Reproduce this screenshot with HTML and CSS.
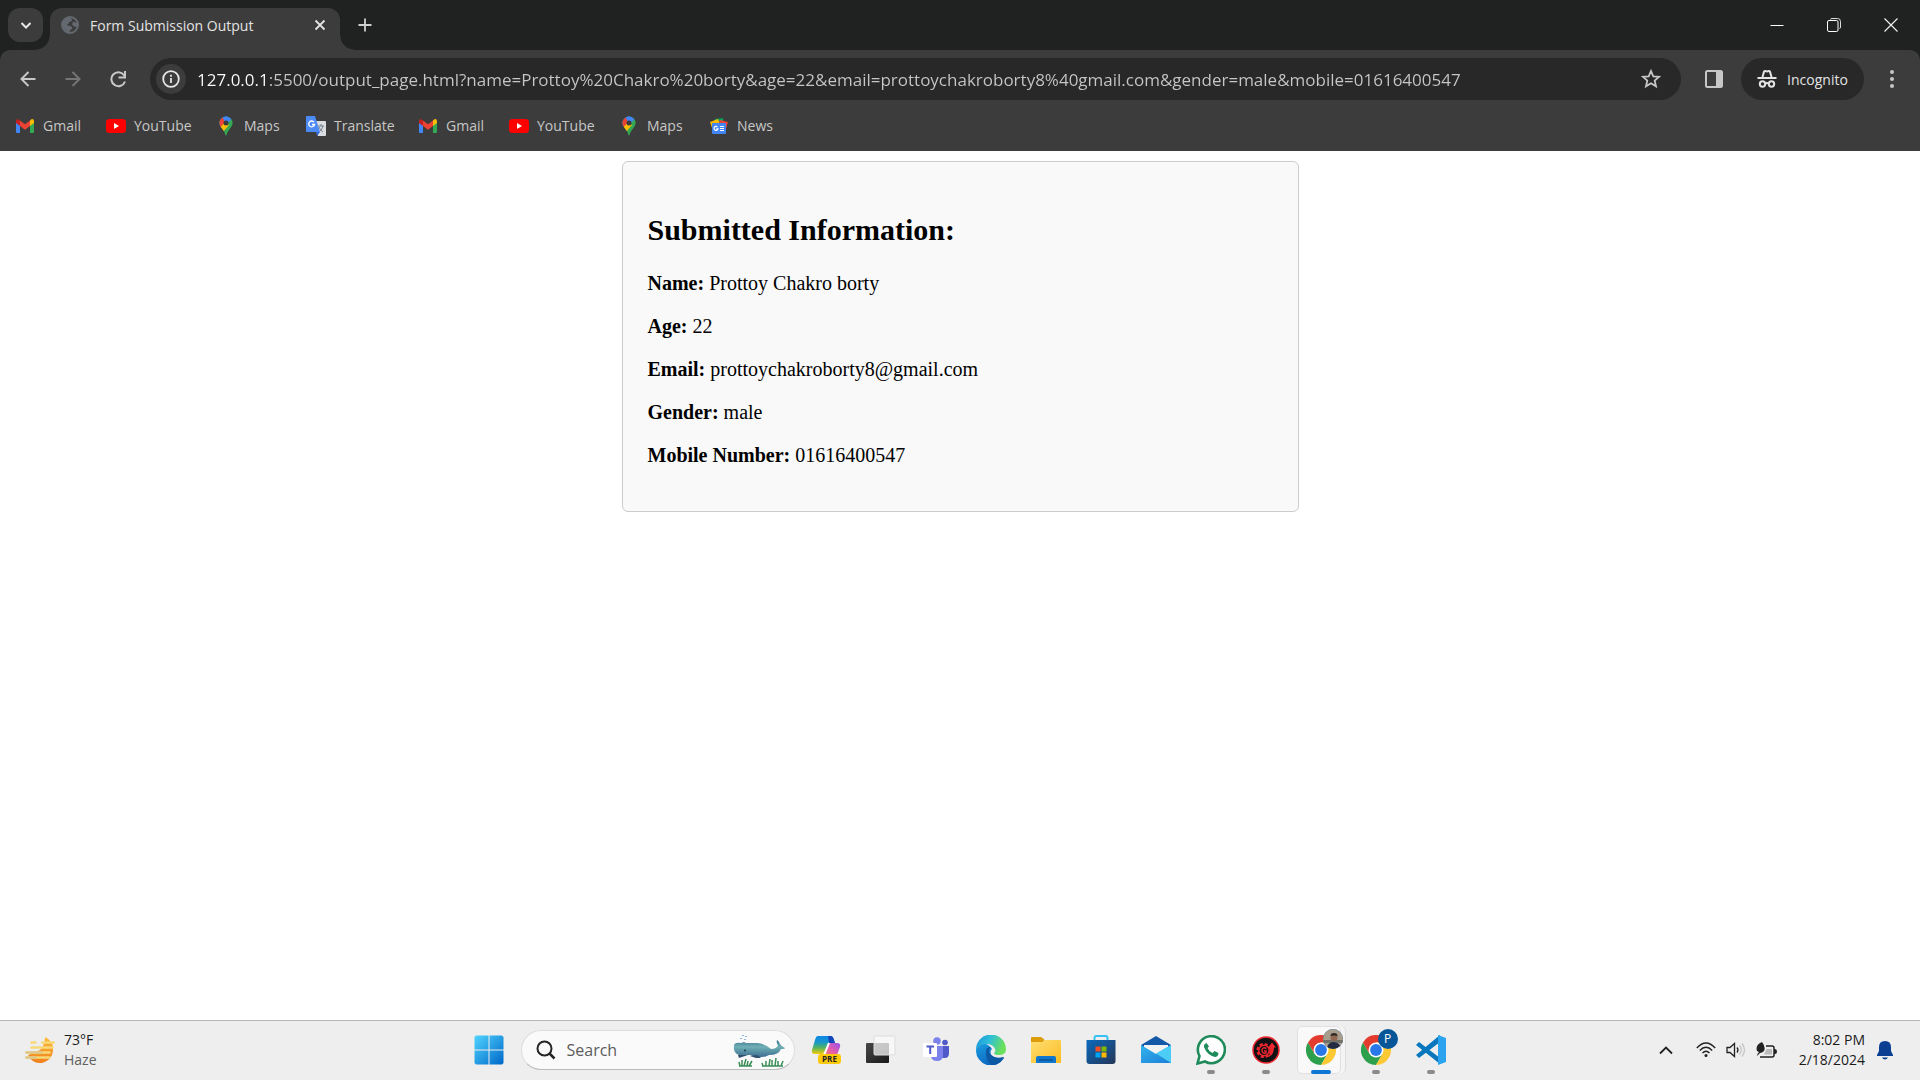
FILE: index.html
```html
<!DOCTYPE html>
<html lang="en">
<head>
<meta charset="utf-8">
<title>Form Submission Output</title>
<link rel="stylesheet" href="styles.css">
</head>
<body>
<svg class="defs" aria-hidden="true">
  <defs>
    <linearGradient id="win" x1="0" y1="0" x2="1" y2="1"><stop offset="0" stop-color="#4fd4fe"/><stop offset="1" stop-color="#0067c8"/></linearGradient>
    <linearGradient id="sun" x1="0" y1="0" x2="0" y2="1"><stop offset="0" stop-color="#fdbd3c"/><stop offset="1" stop-color="#f07f1c"/></linearGradient>
    <linearGradient id="whale" x1="0" y1="0" x2="0" y2="1"><stop offset="0" stop-color="#3f7396"/><stop offset=".4" stop-color="#6fb0b4"/><stop offset="1" stop-color="#3d6d93"/></linearGradient>
    <linearGradient id="copa" x1="0" y1="0" x2="0" y2="1"><stop offset="0" stop-color="#0d87e8"/><stop offset=".35" stop-color="#1897c8"/><stop offset=".65" stop-color="#55b45f"/><stop offset="1" stop-color="#f5cb0a"/></linearGradient>
    <linearGradient id="copb" x1="1" y1="0" x2="0" y2="1"><stop offset="0" stop-color="#9a4fec"/><stop offset=".5" stop-color="#e95fa5"/><stop offset="1" stop-color="#fa8a4c"/></linearGradient>
    <linearGradient id="dark" x1="0" y1="0" x2="1" y2="1"><stop offset="0" stop-color="#484848"/><stop offset="1" stop-color="#191919"/></linearGradient>
    <linearGradient id="edgea" x1="0" y1="0" x2="1" y2=".3"><stop offset="0" stop-color="#1a8fdc"/><stop offset=".5" stop-color="#2fc0d8"/><stop offset="1" stop-color="#6be05a"/></linearGradient>
    <linearGradient id="edgeb" x1="0" y1="0" x2=".6" y2="1"><stop offset="0" stop-color="#1b9de2"/><stop offset="1" stop-color="#0b63bd"/></linearGradient>
    <linearGradient id="fold" x1="0" y1="0" x2="1" y2="1"><stop offset="0" stop-color="#ffdf74"/><stop offset="1" stop-color="#fcbc22"/></linearGradient>
    <linearGradient id="store" x1="0" y1="0" x2="1" y2="1"><stop offset="0" stop-color="#0b6abd"/><stop offset="1" stop-color="#243557"/></linearGradient>
    <linearGradient id="mail" x1="0" y1="0" x2="1" y2="1"><stop offset="0" stop-color="#33b4ec"/><stop offset="1" stop-color="#1b7fd8"/></linearGradient>
    <symbol id="i-gmail" viewBox="0 0 20 20"><path d="M1 5v11q0 1 1 1h3V8z" fill="#4285f4"/><path d="M15 8v9h3q1 0 1-1V5z" fill="#34a853"/><path d="M15 4.500V10l4-3V5q0-2-2-2-.8 0-2 1.500z" fill="#fbbc04"/><path d="M5 4.500V10l5 3.700 5-3.700V4.500l-5 3.800z" fill="#ea4335"/><path d="M1 5v2l4 3V4.500Q3.500 3 2.500 3.200 1 3.500 1 5z" fill="#c5221f"/></symbol>
    <symbol id="i-youtube" viewBox="0 0 20 20"><rect y="3" width="20" height="14" rx="3.500" fill="#f00"/><path d="M8 7l5 3-5 3z" fill="#fff"/></symbol>
    <symbol id="i-maps" viewBox="0 0 20 20"><clipPath id="pin"><path d="M10 .5a6.600 6.600 0 0 0-6.600 6.600c0 2.600 1.600 4.300 3.200 6.200C8.100 15.200 9 17 9.300 18.700q.7 1.600 1.400 0c.3-1.700 1.200-3.500 2.700-5.400 1.600-1.900 3.200-3.600 3.200-6.200A6.600 6.600 0 0 0 10 .5z"/></clipPath><g clip-path="url(#pin)"><path d="M0 0h20v20H0z" fill="#34a853"/><path d="M0 16L14 0H0z" fill="#1a73e8"/><path d="M0 0h6l4 7-8 7z" fill="#ea4335"/><path d="M6 0h14L10 8z" fill="#4285f4"/><path d="M3 13l6-7 4 3-6 7z" fill="#fbbc04"/></g><circle cx="10" cy="7" r="2.500" fill="#3c3c3c"/></symbol>
    <symbol id="i-translate" viewBox="0 0 20 20"><path d="M8 5h11q1 0 1 1v13q0 1-1 1h-7z" fill="#d9dce0"/><path d="M12 10h6m-3-2v2m2 0q-1 4-4 6m0-5q1 3 4 5" stroke="#75808d" fill="none"/><path d="M1 0h8l5 16H1q-1 0-1-1V1q0-1 1-1z" fill="#4c8bf5"/><path d="M10 16h4l-3 4z" fill="#3367d6"/><path d="M8 6.200A2.900 2.900 0 1 0 8.500 8.500H6" stroke="#fff" stroke-width="1.300" fill="none"/></symbol>
    <symbol id="i-news" viewBox="0 0 20 20"><path d="M6 3l8-1 1 6H5z" fill="#0c9d58"/><path d="M1 6l8-3 2 5-8 4z" fill="#fbbc04"/><path d="M11 4l8 2-2 7-8-4z" fill="#ea4335"/><rect x="3" y="7" width="14" height="11" rx="1" fill="#4285f4"/><path d="M8.500 11A2 2 0 1 0 9 12.800H7.300M11 10.500h4M11 12.500h4M11 14.500h4" stroke="#fff" stroke-width="1.200" fill="none"/></symbol>
    <symbol id="i-chrome" viewBox="0 0 30 30"><path d="M2 7.500A15 15 0 0 0 15 30l6.500-11.300L15 15 8.500 18.700z" fill="#2ca04c"/><path d="M15 7.500h13A15 15 0 0 0 2 7.500l6.500 11.200z" fill="#e33b2e"/><path d="M15 7.500h13A15 15 0 0 1 15 30l6.500-11.300z" fill="#fcc934"/><circle cx="15" cy="15" r="7.500" fill="#fff"/><circle cx="15" cy="15" r="5.900" fill="#2878ea"/></symbol>
  </defs>
</svg>

<header class="browser">
  <div class="tabstrip">
    <button class="tab-search" aria-label="Search tabs"><svg width="14" height="14" viewBox="0 0 14 14"><path d="M2.500 5L7 9.500 11.500 5" stroke="#e8e8e8" stroke-width="2" fill="none"/></svg></button>
    <div class="tab">
      <svg width="18" height="18" viewBox="0 0 18 18"><circle cx="9" cy="9" r="8" fill="none" stroke="#646970" stroke-width="2"/><path d="M1 9Q1 3 8 1.500L11 3q0 3-3 3 0 2-2 2.500 0 1 3 1.500 3 .5 2 3-2 0-2.500 3.500Q5 16 2.500 12zM12 6l5 1v3q-2 2-4 0-3-1-1-4z" fill="#646970"/></svg>
      <span class="tab-title">Form Submission Output</span>
      <button class="plain" aria-label="Close tab"><svg width="12" height="12" viewBox="0 0 12 12"><path d="M1.500 1.500l9 9M10.500 1.500l-9 9" stroke="#e3e3e3" stroke-width="1.800"/></svg></button>
    </div>
    <button class="plain new-tab" aria-label="New tab"><svg width="14" height="14" viewBox="0 0 14 14"><path d="M7 .5v13M.5 7h13" stroke="#d0d0d0" stroke-width="1.800"/></svg></button>
    <div class="window-controls">
      <button class="plain" aria-label="Minimize"><svg width="14" height="14" viewBox="0 0 14 14"><path d="M.5 7.500h13" stroke="#fff"/></svg></button>
      <button class="plain" aria-label="Restore"><svg width="14" height="14" viewBox="0 0 14 14" fill="none"><path d="M3.500 1.500Q3.500.5 5 .5h5.500q3 0 3 3V9q0 1.500-1 1.500" stroke="#ddd"/><rect x=".5" y="2.500" width="10.500" height="11" rx="1.500" stroke="#fff"/></svg></button>
      <button class="plain" aria-label="Close"><svg width="14" height="14" viewBox="0 0 14 14"><path d="M.5.5l13 13M13.500.5l-13 13" stroke="#eee" stroke-width="1.200"/></svg></button>
    </div>
  </div>

  <div class="toolbar">
    <nav class="history" aria-label="History">
      <button class="plain" aria-label="Back"><svg width="16" height="16" viewBox="0 0 16 16" fill="none" stroke="#c7c7c7" stroke-width="2"><path d="M15.500 8H2M8.500 1L1.500 8l7 7"/></svg></button>
      <button class="plain" aria-label="Forward"><svg width="16" height="16" viewBox="0 0 16 16" fill="none" stroke="#757575" stroke-width="2"><path d="M.5 8H14M7.500 1l7 7-7 7"/></svg></button>
      <button class="plain" aria-label="Reload"><svg width="18" height="18" viewBox="0 0 18 18" fill="none" stroke="#c7c7c7" stroke-width="2"><path d="M16 11.500A7 7 0 1 1 15 5l1 2"/><path d="M16 1v6.500h-6.500"/></svg></button>
    </nav>
    <div class="omnibox">
      <button class="site-info" aria-label="Site information"><svg width="18" height="18" viewBox="0 0 18 18"><circle cx="9" cy="9" r="7.800" fill="none" stroke="#e6e6e6" stroke-width="1.800"/><path d="M9 8v5M9 4.800v2" stroke="#e6e6e6" stroke-width="1.800"/></svg></button>
      <input class="url" type="text" aria-label="Address" value="127.0.0.1:5500/output_page.html?name=Prottoy%20Chakro%20borty&amp;age=22&amp;email=prottoychakroborty8%40gmail.com&amp;gender=male&amp;mobile=01616400547">
      <button class="plain" aria-label="Bookmark this tab"><svg width="20" height="20" viewBox="0 0 20 20"><path d="M10 2l2.300 5.300 5.700.5-4.300 3.800 1.300 5.700-5-3-5 3 1.300-5.700L2 7.800l5.700-.5z" fill="none" stroke="#c7c7c7" stroke-width="1.800"/></svg></button>
    </div>
    <button class="plain side-panel" aria-label="Side panel"><svg width="18" height="18" viewBox="0 0 18 18"><rect x="1" y="1" width="16" height="16" rx="1.500" fill="none" stroke="#c7c7c7" stroke-width="2"/><path d="M11 1h6v16h-6z" fill="#c7c7c7"/></svg></button>
    <button class="incognito"><svg width="20" height="20" viewBox="0 0 20 20"><path d="M.5 8h19v2H.5z" fill="#e3e3e3"/><path d="M4.500 8L6 2.500Q6.500.5 8.500 1l1.500.4 1.500-.4q2-.5 2.500 1.500L15.500 8h-2L12 3l-2 .5L8 3 6.500 8z" fill="#e3e3e3"/><g fill="none" stroke="#e3e3e3" stroke-width="2"><circle cx="5.500" cy="15" r="2.700"/><circle cx="14.500" cy="15" r="2.700"/><path d="M8 14.500q2-1 4 0"/></g></svg>Incognito</button>
    <button class="plain menu" aria-label="Menu"><svg width="6" height="20" viewBox="0 0 6 20" fill="#c7c7c7"><circle cx="3" cy="3" r="2"/><circle cx="3" cy="10" r="2"/><circle cx="3" cy="17" r="2"/></svg></button>
  </div>

  <nav class="bookmarks" aria-label="Bookmarks">
    <a href="#"><svg><use href="#i-gmail"/></svg>Gmail</a>
    <a href="#"><svg><use href="#i-youtube"/></svg>YouTube</a>
    <a href="#"><svg><use href="#i-maps"/></svg>Maps</a>
    <a href="#"><svg><use href="#i-translate"/></svg>Translate</a>
    <a href="#"><svg><use href="#i-gmail"/></svg>Gmail</a>
    <a href="#"><svg><use href="#i-youtube"/></svg>YouTube</a>
    <a href="#"><svg><use href="#i-maps"/></svg>Maps</a>
    <a href="#"><svg><use href="#i-news"/></svg>News</a>
  </nav>
</header>

<main class="page">
  <section class="card">
    <h2>Submitted Information:</h2>
    <p><strong>Name:</strong> Prottoy Chakro borty</p>
    <p><strong>Age:</strong> 22</p>
    <p><strong>Email:</strong> prottoychakroborty8@gmail.com</p>
    <p><strong>Gender:</strong> male</p>
    <p><strong>Mobile Number:</strong> 01616400547</p>
  </section>
</main>

<footer class="taskbar">
  <button class="weather">
    <svg width="30" height="30" viewBox="0 0 30 30"><path d="M20 2q9 4 8 14a13 13 0 0 1-25 4l8-3q9-3 9-15z" fill="url(#sun)"/><path d="M6.500 7.500h4M17 7.500h12M6.500 12.500h21M1.500 17.500h23M1.500 22.500h23" stroke="#f8d978" stroke-width="2.500" stroke-linecap="round"/><path d="M1.500 17.500h15M1.500 22.500h9" stroke="#dcc78c" stroke-width="2.500" stroke-linecap="round"/></svg>
    <span class="weather-text"><span>73°F</span><span class="muted">Haze</span></span>
  </button>

  <div class="apps">
    <button class="app" aria-label="Start"><svg width="30" height="30" viewBox="0 0 30 30"><path d="M2 .5h12.500v14H.5V2zM15.500.5H28l1.500 1.500v12.500h-14zM.5 15.500h14v14H2L.5 28zM15.500 15.500h14V28L28 29.500H15.500z" fill="url(#win)"/></svg></button>
    <label class="search">
      <svg width="20" height="20" viewBox="0 0 20 20" fill="none" stroke="#252525"><circle cx="8.500" cy="8.500" r="7" stroke-width="2"/><path d="M13.500 13.500l5 5" stroke-width="2.500"/></svg>
      <input type="search" placeholder="Search" aria-label="Search">
      <svg width="52" height="34" viewBox="0 0 52 34"><path d="M1 13Q1 9 8 10l3-1 2 1h11q9 1 14 6 6 0 7-4-2-2-1-5 2 1 3 4 1 2 5 4 0 1-4 1-2 6-12 6-5 3-14 2l-5-2H6Q0 20 1 13z" fill="url(#whale)"/><path d="M5 22h10l-9 3zM17 23l6 2h5l-4-3z" fill="#31506d"/><circle cx="12" cy="17.500" r="1" fill="#19384f"/><path d="M10 2v1M8 5v1M12 6v1M13 3v1" stroke="#6aa6e0" stroke-width="1.500"/><path d="M7 33l-1-4M9 33v-6M11 33l2-7M14 33l1-5M16 33l3-5M30 33l-1-3M33 33v-5M36 33l1-7M39 33v-6M42 33l1-8M45 33v-5M48 33l2-5M6 33h13M29 33h21" stroke="#3a8c57" stroke-width="1.500" fill="none"/></svg>
    </label>
    <button class="app" aria-label="Copilot preview"><svg width="30" height="30" viewBox="0 0 30 30"><path d="M7 1h12q3 0 4 4l1 3h-6l-5 11H4Q0 19 1 15L4 5q1-4 3-4z" fill="url(#copa)"/><path d="M17 1h3q2 0 3 4l1 3h-6z" fill="#1246ba"/><path d="M19 8h7q4 0 3 4l-3 8q-1 3-4 3H10q4-1 5-5l2-7q.5-3 2-3z" fill="url(#copb)"/><path d="M18 8l-5 12" stroke="#fff" stroke-width="2"/><rect x="7" y="19" width="23" height="10" rx="3" fill="#fdc90b"/><text x="18.500" y="27" text-anchor="middle" class="pre">PRE</text></svg></button>
    <button class="app" aria-label="Task view"><svg width="30" height="30" viewBox="0 0 30 30"><rect y="8" width="23" height="20" rx="1" fill="url(#dark)"/><rect x="8" y="1" width="21" height="19" rx="1" fill="#fafafa" fill-opacity=".75" stroke="#ddd"/></svg></button>
    <button class="app" aria-label="Teams"><svg width="30" height="30" viewBox="0 0 30 30"><circle cx="16" cy="6" r="3.800" fill="#7b83eb"/><circle cx="24" cy="7.500" r="2.800" fill="#5059c9"/><path d="M19 11h9v7q0 5-4 5t-4-2z" fill="#5059c9"/><path d="M10 11h12v9q0 6-6 6t-6-6z" fill="#7b83eb"/><rect x="2" y="8" width="14" height="14" rx="1" fill="#fff"/><path d="M5.500 11.500h7.500M9.200 11.500V19" stroke="#5059c9" stroke-width="2"/></svg></button>
    <button class="app" aria-label="Edge"><svg width="30" height="30" viewBox="0 0 30 30"><path d="M0 15a15 15 0 0 0 28 8q-8 3-12-2-3-4 0-7-4-6-10-5-4 1-6 6z" fill="url(#edgeb)"/><path d="M0 15A15 15 0 0 1 30 14q0 6-7 6-5 0-5-2 2-1 1-4-2-5-9-5-7 0-10 6z" fill="url(#edgea)"/><path d="M10 16q0-4 5-4-4 4 0 8 5 4 12 2 2 0 0 2a15 15 0 0 1-12 6q-6-6-5-14z" fill="#0c59a4"/></svg></button>
    <button class="app" aria-label="File Explorer"><svg width="30" height="30" viewBox="0 0 30 30"><path d="M0 8V3q0-1 1-1h9l3 2v4z" fill="#dc9c0b"/><path d="M0 7h11l3-2h15q1 0 1 1v22H0z" fill="url(#fold)"/><path d="M5 28v-5q0-2 2-2h16q2 0 2 2v5z" fill="#0f78ce"/><path d="M8 25h14" stroke="#0a528f" stroke-width="1.500"/></svg></button>
    <button class="app" aria-label="Microsoft Store"><svg width="30" height="30" viewBox="0 0 30 30"><path d="M8.500 7V3q0-2 2-2h9q2 0 2 2v4" fill="none" stroke="#35c1f1" stroke-width="2"/><path d="M.5 5h29v21q0 3-3 3h-23q-3 0-3-3z" fill="url(#store)"/><path d="M9.500 11.500h5v5h-5z" fill="#f25022"/><path d="M15.500 11.500h5v5h-5z" fill="#7fba00"/><path d="M9.500 17.500h5v5h-5z" fill="#00a4ef"/><path d="M15.500 17.500h5v5h-5z" fill="#ffb900"/></svg></button>
    <button class="app" aria-label="Mail"><svg width="30" height="30" viewBox="0 0 30 30"><path d="M0 10L15 1l15 9-8 8H8z" fill="#1459a8"/><path d="M3 10h24v6l-12 8-12-8z" fill="#f2f2f2"/><path d="M0 10l15 9 15-9v18H0z" fill="url(#mail)"/><path d="M30 10L15 18.500 30 28z" fill="#4ccdf5"/></svg></button>
    <button class="app running" aria-label="WhatsApp"><svg width="30" height="30" viewBox="0 0 30 30"><path d="M1.500 28.500l2-7.500A13.500 13.500 0 1 1 9 26.500z" fill="#fff" stroke="#1f8a5a" stroke-width="2.600"/><path d="M10.500 8q-3 1-2.500 4 3 8 11 10 3 0 3.500-4l-4-2-2 2q-3.500-1.500-5-5l1.500-1.500z" fill="#1f8a5a"/></svg></button>
    <button class="app running" aria-label="Game Center"><svg width="30" height="30" viewBox="0 0 30 30"><circle cx="15" cy="15" r="13" fill="#111" stroke="#ee2630" stroke-width="1.500"/><circle cx="13" cy="15.500" r="5.200" fill="none" stroke="#ee2630" stroke-width="1.500"/><circle cx="13" cy="15.500" r="6.500" fill="none" stroke="#ee2630" stroke-width="2.200" stroke-dasharray="3 2.100"/><path d="M15.500 13.500q-4-2-4.500 1.500 0 4 4 3v-2h-2" fill="none" stroke="#ee2630" stroke-width="1.400"/><path d="M16 22.500q4-3 3-10h-2l4-5 4 5h-2q0 8-7 10z" fill="#ee2630"/></svg></button>
    <button class="app running active" aria-label="Google Chrome"><svg width="30" height="30"><use href="#i-chrome"/></svg><span class="avatar"><svg width="20" height="20" viewBox="0 0 20 20"><path d="M0 0h20v20H0z" fill="#a79d8c"/><path d="M0 11h20v3H0z" fill="#71716a"/><path d="M4 20q0-6 6-7 7 0 8 7z" fill="#232b43"/><circle cx="11" cy="8.500" r="3.500" fill="#926853"/><path d="M7.500 7q0-3 3.500-3t3.500 3q-3.500-1-7 0z" fill="#2e2925"/></svg></span></button>
    <button class="app running" aria-label="Google Chrome, profile P"><svg width="30" height="30"><use href="#i-chrome"/></svg><span class="avatar">P</span></button>
    <button class="app running" aria-label="Visual Studio Code"><svg width="30" height="30" viewBox="0 0 30 30"><path d="M0 10l3-3L24 23v6z" fill="#0877bd"/><path d="M0 20l3 3L24 7V0z" fill="#0877bd"/><path d="M22 0l8 3v24l-8 3z" fill="#2aa4ee"/></svg></button>
  </div>

  <div class="tray">
    <button class="plain chevron" aria-label="Show hidden icons"><svg width="16" height="10" viewBox="0 0 16 10"><path d="M2 8.500l6-6 6 6" stroke="#222" stroke-width="1.800" fill="none"/></svg></button>
    <button class="plain status" aria-label="Network, volume and battery">
      <svg width="20" height="16" viewBox="0 0 20 16" fill="none" stroke="#222" stroke-width="1.400"><path d="M.8 6Q10-4 19.200 6M3.800 8.500q6.200-6.500 12.400 0M6.500 11Q10 7.500 13.500 11"/><circle cx="10" cy="13.500" r="1.500" fill="#222" stroke="none"/></svg>
      <svg width="20" height="16" viewBox="0 0 20 16" fill="none" stroke-width="1.300"><path d="M1 5.500h3l4.500-4v13L4 10.500H1zM11 5.500q2 2.500 0 5" stroke="#222"/><path d="M13.500 3.500q3.500 4.500 0 9M16 1.500q5 6.500 0 13" stroke="#c3c3c3"/></svg>
      <svg width="21" height="16" viewBox="0 0 21 16"><path d="M10 4h6q2 0 2 2v7q0 2-2 2H4" fill="none" stroke="#222" stroke-width="1.500"/><path d="M18 7h1q2 0 2 2.500T19 12h-1z" fill="#222"/><path d="M10.500 7H16v5.500H8z" fill="#bbb"/><path d="M1 9Q-1 3 6 0q4 5 2 9-2 2-4 2l-3 3q0-2 2-4z" fill="#222"/></svg>
    </button>
    <button class="plain clock"><span>8:02 PM</span><span>2/18/2024</span></button>
    <button class="plain" aria-label="Notifications"><svg width="16" height="20" viewBox="0 0 16 20"><path d="M0 15l2-4V7q0-6 6-6t6 6v4l2 4v1H0zM5 17.500h6q-1 2-3 2t-3-2z" fill="#0a3f91"/></svg></button>
  </div>
</footer>
</body>
</html>
```
FILE: styles.css
```css
* { box-sizing: border-box; }

body {
  margin: 0;
  min-height: 100vh;
  display: flex;
  flex-direction: column;
  background: #fff;
  font-family: "Open Sans", "Noto Sans", sans-serif;
}

.defs { position: absolute; width: 0; height: 0; }

svg { display: block; flex: none; }

button, input { font: inherit; color: inherit; border: 0; outline: 0; }

button {
  display: flex;
  align-items: center;
  justify-content: center;
  padding: 0;
}

.plain { background: none; }

/* Browser window */
.browser { background: #202121; }

.tabstrip {
  display: flex;
  height: 50px;
  padding: 8px 1px 0 8px;
}

.tab-search {
  width: 35px;
  height: 34px;
  border-radius: 12px;
  background: #3c3c3c;
}

.tab {
  position: relative;
  display: flex;
  align-items: center;
  width: 290px;
  margin-left: 7px;
  padding: 0 14px 8px 11px;
  border-radius: 12px 12px 0 0;
  background: #3c3c3c;
}

.tab::before, .tab::after {
  content: "";
  position: absolute;
  bottom: 0;
  width: 14px;
  height: 14px;
}

.tab::before { right: 100%; background: radial-gradient(circle at 0 0, transparent 13px, #3c3c3c 14px); }
.tab::after { left: 100%; background: radial-gradient(circle at 100% 0, transparent 13px, #3c3c3c 14px); }

.tab-title {
  flex: 1;
  margin-left: 11px;
  font-size: 14px;
  color: #e3e3e3;
}

.new-tab { height: 34px; margin-left: 18px; }

.window-controls {
  display: flex;
  height: 34px;
  margin-left: auto;
}

.window-controls button { width: 57px; }

.toolbar {
  display: flex;
  align-items: center;
  height: 58px;
  padding: 0 25px 0 5px;
  border-radius: 10px 10px 0 0;
  background: #3c3c3c;
}

.history { display: flex; }
.history button { width: 45px; height: 42px; }

.omnibox {
  display: flex;
  flex: 1;
  align-items: center;
  height: 42px;
  margin-left: 10px;
  padding: 0 20px 0 6px;
  border-radius: 21px;
  background: #282828;
}

.site-info {
  width: 30px;
  height: 30px;
  border-radius: 50%;
  background: #3c3c3c;
}

/* The host is brighter than the rest of the address */
.url {
  flex: 1;
  min-width: 0;
  margin-left: 11px;
  padding: 0;
  font-size: 17px;
  color: transparent;
  background: linear-gradient(90deg, #fff 72px, #c7c7c7 72px);
  background-clip: text;
  -webkit-background-clip: text;
}

.side-panel { margin-left: 24px; }

.incognito {
  gap: 10px;
  height: 42px;
  width: 123px;
  margin-left: 18px;
  border-radius: 21px;
  background: #282828;
  color: #e3e3e3;
  font-size: 14px;
}

.menu { margin-left: 25px; }

.bookmarks {
  display: grid;
  grid-template-columns: 91px 110px 90px 112px 91px 110px 90px auto;
  align-items: center;
  height: 43px;
  padding: 0 15px 8px;
  background: #3c3c3c;
}

.bookmarks a {
  display: flex;
  align-items: center;
  gap: 8px;
  color: #c7c7c7;
  font-size: 14px;
  text-decoration: none;
}

.bookmarks svg { width: 20px; height: 20px; }

/* Page content */
.page { flex: 1; padding: 10px; }

.card {
  max-width: 677px;
  margin: 0 auto;
  padding: 25px 25px 24px;
  border: 1px solid #ccc;
  border-radius: 6px;
  background: #f9f9f9;
  color: #000;
  font: 20px/23px "Liberation Serif", serif;
}

.card h2 {
  margin: 25px 0;
  font-size: 30px;
  line-height: 35px;
}

.card p { margin: 20px 0; }

/* Taskbar */
.taskbar {
  display: grid;
  grid-template-columns: 1fr auto 1fr;
  align-items: center;
  height: 60px;
  padding-bottom: 2px;
  border-top: 1px solid #b8b8b8;
  background: #eee;
  font-size: 14px;
  line-height: 20px;
  color: #1b1b1b;
}

.weather {
  justify-self: start;
  gap: 9px;
  margin-left: 25px;
  background: none;
}

.weather-text { display: flex; flex-direction: column; text-align: left; }
.muted { color: #606060; }

.apps { display: flex; align-items: center; }

.app {
  position: relative;
  width: 55px;
  height: 48px;
  background: none;
}

.app > svg { position: relative; }

.running::after {
  content: "";
  position: absolute;
  bottom: 0;
  left: calc(50% - 4px);
  width: 8px;
  height: 4px;
  border-radius: 2px;
  background: #8a8a8a;
}

.active::before {
  content: "";
  position: absolute;
  inset: 0 8px 0 3px;
  border: 1px solid #e0e0e0;
  border-radius: 5px;
  background: #f9f9f9;
  box-shadow: 4px 0 0 #f4f4f4, 5px 0 0 #ddd;
}

.active::after {
  left: calc(50% - 10px);
  width: 20px;
  background: #0f78d4;
}

.avatar {
  position: absolute;
  top: 3px;
  right: 6px;
  width: 20px;
  height: 20px;
  border-radius: 50%;
  overflow: hidden;
  background: #075698;
  color: #fff;
  font-size: 12px;
  text-align: center;
}

.pre { font: bold 8px "Open Sans", sans-serif; fill: #222; }

.search {
  display: flex;
  align-items: center;
  width: 274px;
  height: 40px;
  margin: 0 4px;
  padding: 0 9px 0 14px;
  border: 1px solid #ddd;
  border-bottom-color: #bbb;
  border-radius: 20px;
  background: #fafafa;
}

.search input {
  flex: 1;
  min-width: 0;
  margin-left: 11px;
  padding: 0;
  background: none;
  font-size: 16px;
}

.search input::placeholder { color: #5c5c5c; opacity: 1; }

.tray {
  display: flex;
  align-items: center;
  justify-self: end;
  margin-right: 27px;
}

.chevron { margin-right: 22px; }
.status { gap: 10px; }

.clock {
  flex-direction: column;
  align-items: flex-end;
  width: 78px;
  margin: 0 12px 0 10px;
}
```
